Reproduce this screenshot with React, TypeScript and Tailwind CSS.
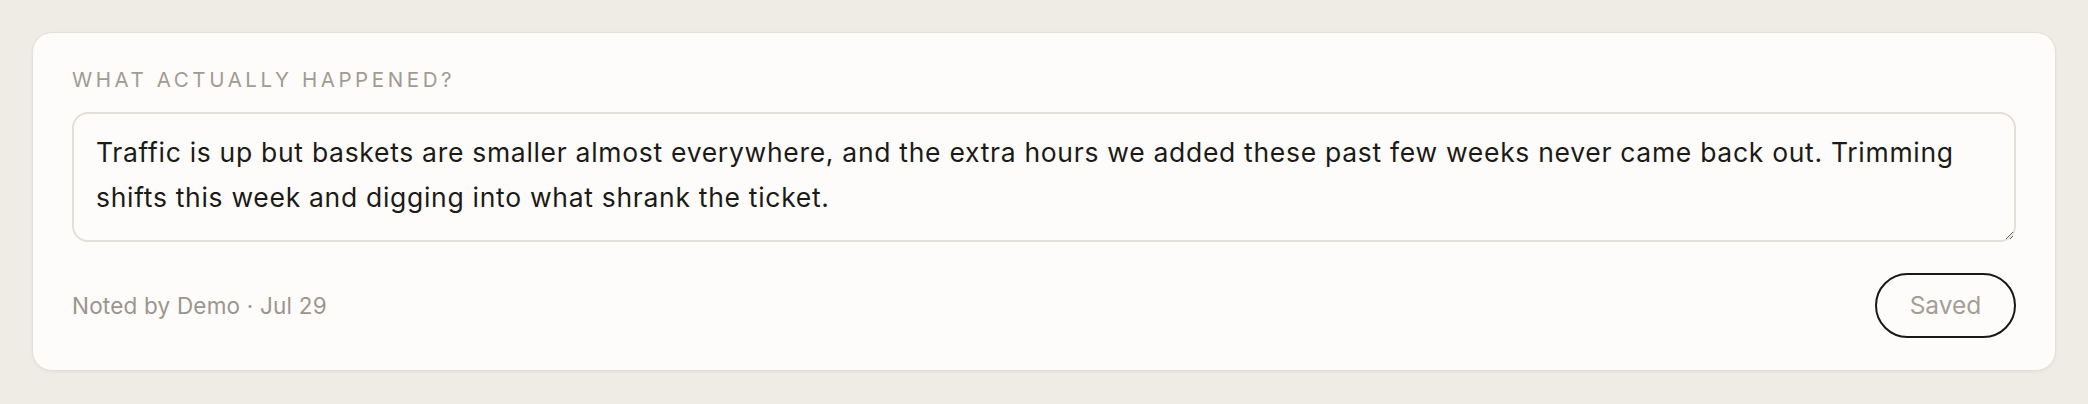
import { useState } from 'react'

export default function App() {
  const [note, setNote] = useState(
    'Traffic is up but baskets are smaller almost everywhere, and the extra hours we added these past few weeks never came back out. Trimming shifts this week and digging into what shrank the ticket.'
  )

  return (
    <div className="min-h-screen bg-[#efece6] p-8 font-['Inter',sans-serif]">
      <section className="rounded-[20px] border border-[#e4dfd8] bg-[#fdfcfa] px-[39px] pt-[35px] pb-[32px] shadow-[0_1px_3px_rgba(60,50,40,0.06)]">
        <label
          htmlFor="note"
          className="block text-[20.5px] leading-[24px] tracking-[0.175em] uppercase text-[#a19b93]"
        >
          What actually happened?
        </label>

        <textarea
          id="note"
          value={note}
          onChange={(e) => setNote(e.target.value)}
          className="mt-5 block h-[130px] w-full rounded-2xl border-2 border-[#e4dfd8] bg-[#fdfcfa] px-[22px] py-4 text-[26.5px] leading-[45px] tracking-[0.7px] text-[#1c1a17] outline-none"
        />

        <div className="mt-[31px] flex items-center justify-between">
          <span className="text-[22.5px] tracking-[0.2px] text-[#9b958d]">Noted by Demo · Jul 29</span>
          <button className="flex h-[65px] w-[141px] items-center justify-center rounded-full border-2 border-[#1a1816] text-[24.5px] text-[#a59e96]">
            Saved
          </button>
        </div>
      </section>
    </div>
  )
}
